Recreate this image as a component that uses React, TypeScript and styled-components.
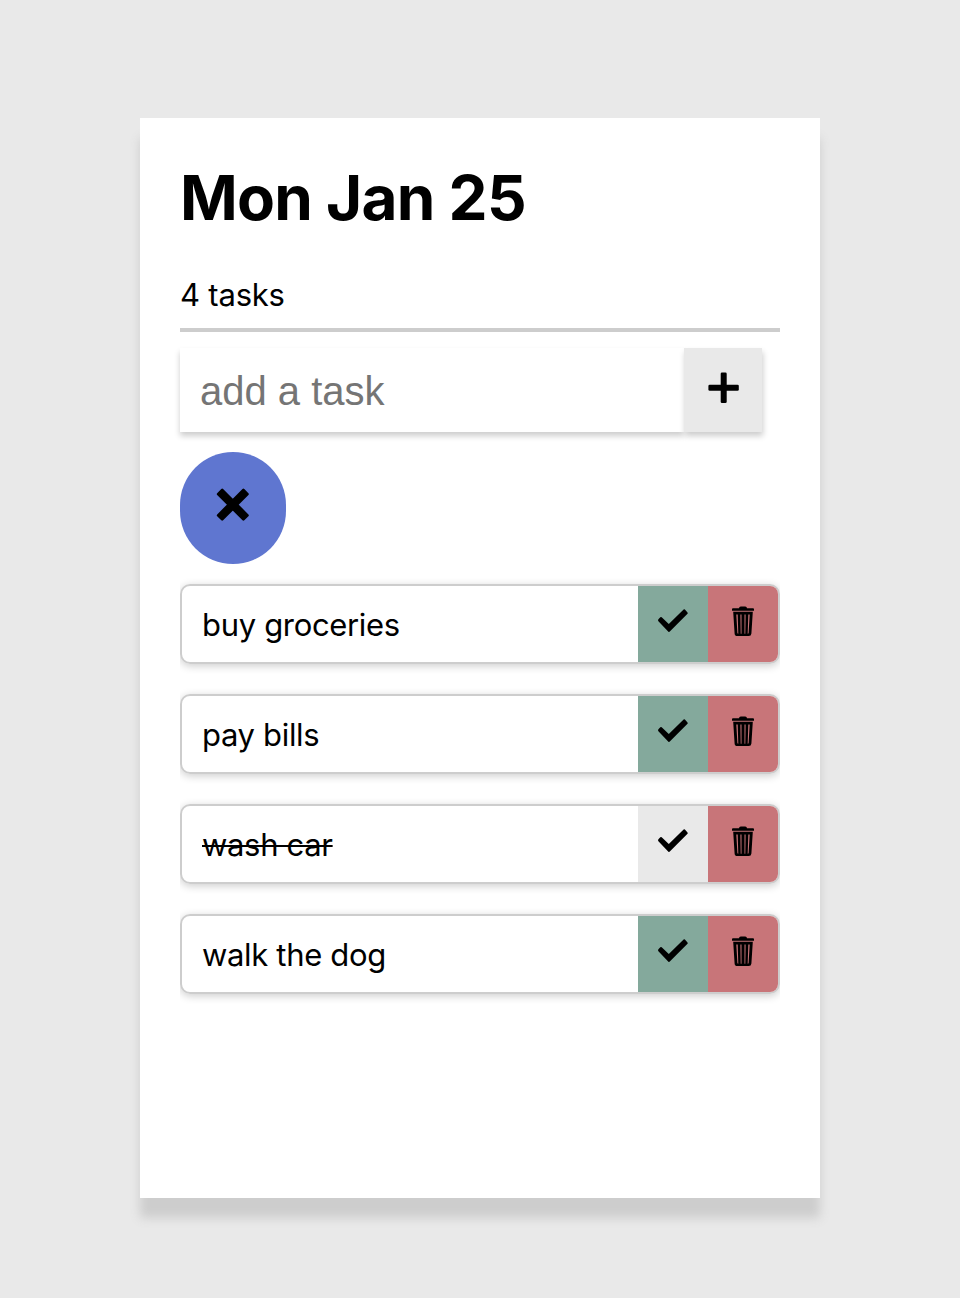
import React from "react";
import styled, { createGlobalStyle } from "styled-components";

const GlobalStyle = createGlobalStyle`
  * { box-sizing: border-box; }
  body { margin: 0; background: #e9e9e9; color: #000; font-family: Inter, "Liberation Sans", sans-serif; }
`;

const Page = styled.div`
  display: flex;
  justify-content: center;
  align-items: flex-start;
  height: 1298px;
  padding-top: 118px;
`;

const Card = styled.main`
  width: 680px;
  height: 1080px;
  padding: 40px;
  background: #fff;
  box-shadow: 0 20px 10px #cdcdcd;
`;

const Title = styled.h1`
  margin: 0;
  height: 78px;
  padding-top: 1px;
  font-size: 62px;
  line-height: 78px;
  font-weight: 700;
  letter-spacing: -0.75px;
  white-space: nowrap;
`;

const Count = styled.p`
  margin: 38px 0 0;
  height: 58px;
  padding-top: 2px;
  border-bottom: 4px solid #cdcdcd;
  font-size: 31px;
  line-height: 38px;
  letter-spacing: -0.2px;
`;

const AddForm = styled.form`
  display: flex;
  margin-top: 16px;
  height: 84px;
`;

const TaskInput = styled.input`
  width: 504px;
  height: 84px;
  padding: 2px 20px 0;
  border: 0;
  border-radius: 0;
  outline: 0;
  background: #fff;
  font-family: "Liberation Sans", Arial, sans-serif;
  font-size: 40px;
  box-shadow: 0 4px 6px #cdcdcd;
  &::placeholder { color: #757575; opacity: 1; }
`;

const IconButton = styled.button`
  display: flex;
  justify-content: center;
  flex-shrink: 0;
  margin: 0;
  padding: 0;
  border: 0;
  color: #000;
  svg { display: block; fill: currentColor; }
`;

const AddButton = styled(IconButton)`
  width: 78px;
  height: 84px;
  padding-top: 24px;
  background: #e9e9e9;
  box-shadow: 1px 4px 6px #cdcdcd;
`;

const ClearButton = styled(IconButton)`
  width: 106px;
  height: 112px;
  margin-top: 20px;
  padding-top: 36px;
  border-radius: 60px;
  background: #5f76d0;
`;

const TaskList = styled.ul`
  margin: 0;
  padding: 20px 0 30px;
  list-style: none;
  overflow: hidden;
`;

const TaskRow = styled.li`
  display: flex;
  height: 80px;
  border: 2px solid #cdcdcd;
  border-radius: 10px;
  box-shadow: 0 2px 8px #cdcdcd;
  & + & { margin-top: 30px; }
`;

const TaskName = styled.span<{ $done?: boolean }>`
  flex: 1;
  padding-left: 20px;
  font-size: 31px;
  line-height: 77px;
  letter-spacing: -0.33px;
  text-decoration: ${(p) => (p.$done ? "line-through" : "none")};
  text-decoration-thickness: 2px;
`;

const CheckButton = styled(IconButton)<{ $done?: boolean }>`
  width: 70px;
  padding-top: 20px;
  background: ${(p) => (p.$done ? "#e9e9e9" : "#84a99c")};
`;

const DeleteButton = styled(IconButton)`
  width: 70px;
  padding-top: 20px;
  border-radius: 0 8px 8px 0;
  background: #c87579;
`;

const PlusIcon = () => (
  <svg width="32" height="32" viewBox="0 0 32 32">
    <rect x="1.4" y="12.8" width="30.4" height="6" rx="1.3" />
    <rect x="13.7" y="0.5" width="6" height="30.6" rx="1.3" />
  </svg>
);

const CrossIcon = () => (
  <svg width="34" height="34" viewBox="0 0 34 34">
    <g transform="translate(16.8 16.7) rotate(45)">
      <rect x="-19.2" y="-4.2" width="38.4" height="8.4" rx="1.3" />
      <rect x="-4.2" y="-19.2" width="8.4" height="38.4" rx="1.3" />
    </g>
  </svg>
);

const CheckIcon = () => (
  <svg width="32" height="32" viewBox="0 0 32 32">
    <path d="M1.4 13.2 3.3 11.2Q4 10.6 4.7 11.2L11.8 18 26.6 3.5Q27.2 2.9 27.9 3.5L30.5 6.4Q31.1 7.1 30.5 7.8L12.8 25.6Q12.1 26.4 11.4 25.7L1.4 15.2Q.6 14.2 1.4 13.2Z" />
  </svg>
);

const TrashIcon = () => (
  <svg width="32" height="32" viewBox="0 0 32 32">
    <path d="M12 2.2Q12.1.4 13.8.4H18.2Q19.9.4 20 2.2H26Q27 2.2 27 3.2V4.8H5V3.2Q5 2.2 6 2.2Z" />
    <path
      fillRule="evenodd"
      d="M6.2 5.8H25.8L24.4 27.4Q24.2 30 21.7 30H10.3Q7.8 30 7.6 27.4ZM9.3 8.5 10.4 27Q10.5 27.8 11.3 27.8L10.7 8.5ZM13.4 8.5 13.7 27.8H14.5V8.5ZM17.5 8.5V27.8H18.3L18.6 8.5ZM21.3 8.5 20.7 27.8Q21.5 27.8 21.6 27L22.7 8.5Z"
    />
  </svg>
);

const tasks = [
  { name: "buy groceries", done: false },
  { name: "pay bills", done: false },
  { name: "wash car", done: true },
  { name: "walk the dog", done: false },
];

export default function App() {
  return (
    <>
      <GlobalStyle />
      <Page>
        <Card>
          <Title>Mon Jan 25</Title>
          <Count>4 tasks</Count>
          <AddForm onSubmit={(e) => e.preventDefault()}>
            <TaskInput placeholder="add a task" />
            <AddButton type="submit" aria-label="Add task"><PlusIcon /></AddButton>
          </AddForm>
          <ClearButton type="button" aria-label="Clear tasks"><CrossIcon /></ClearButton>
          <TaskList>
            {tasks.map((task) => (
              <TaskRow key={task.name}>
                <TaskName $done={task.done}>{task.name}</TaskName>
                <CheckButton $done={task.done} type="button" aria-label="Complete"><CheckIcon /></CheckButton>
                <DeleteButton type="button" aria-label="Delete"><TrashIcon /></DeleteButton>
              </TaskRow>
            ))}
          </TaskList>
        </Card>
      </Page>
    </>
  );
}
